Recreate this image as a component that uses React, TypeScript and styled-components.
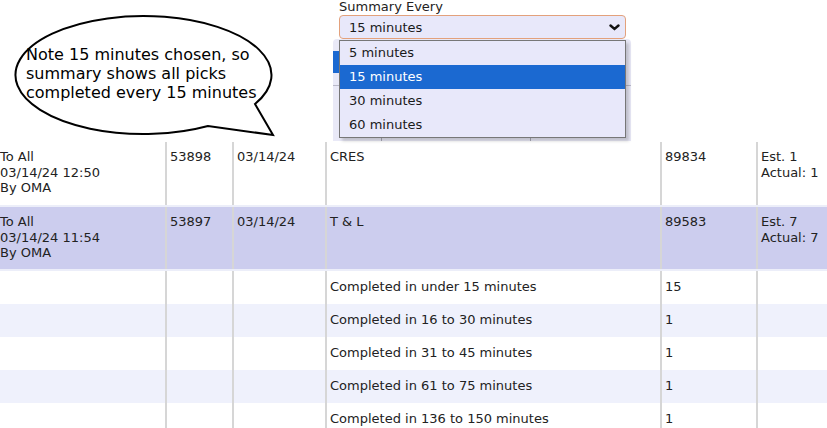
import { FC } from "react";
import styled, { createGlobalStyle } from "styled-components";

const GlobalStyle = createGlobalStyle`
  html, body {
    margin: 0;
    padding: 0;
    background: #fff;
    overflow: hidden;
  }
  body {
    font-family: "DejaVu Sans", Verdana, sans-serif;
    font-size: 13px;
    color: #222;
  }
`;

const COLUMNS = "165px 67px 93px 335px 96px 1fr";

const Page = styled.div`
  position: relative;
  width: 827px;
  height: 428px;
  overflow: hidden;
`;

const Top = styled.div`
  display: flex;
  height: 142px;
  padding-left: 333px;
`;

const FilterColumn = styled.div`
  position: relative;
  display: flex;
  flex-direction: column;
  width: 298px;
`;

const FilterLabel = styled.div`
  padding-left: 6px;
  line-height: 14px;
  color: #222;
`;

const SelectBox = styled.div`
  display: flex;
  align-items: center;
  justify-content: space-between;
  box-sizing: border-box;
  margin: 1px 0 0 6px;
  width: 287px;
  height: 24px;
  padding: 1px 5px 0 9px;
  border: 1px solid #e3a17c;
  border-radius: 4px;
  background: #e8e8fa;
  color: #1a1a1a;
`;

const TabPanel = styled.div`
  flex: 1;
  display: flex;
  flex-direction: column;
  margin: 0 0 1px;
  background: #e9e9f7;
  border-radius: 4px 4px 0 0;
`;

const TabBand = styled.div`
  height: 46px;
  border-bottom: 1px solid #b9b9c9;
`;

const ActiveTab = styled.div`
  margin-top: 12px;
  width: 6px;
  height: 22px;
  background: #1b69d1;
`;

const TabGrid = styled.div`
  flex: 1;
  display: grid;
  grid-template-columns: 48px 149px 1fr;
`;

const TabCol = styled.div<{ $first?: boolean }>`
  border-left: ${({ $first }) => ($first ? "none" : "1px solid #a9a9b5")};
`;

const OptionList = styled.ul`
  position: absolute;
  top: 40px;
  left: 6px;
  box-sizing: border-box;
  width: 287px;
  margin: 0;
  padding: 0;
  list-style: none;
  background: #e8e8fa;
  border: 1px solid #777;
  box-shadow: 3px 3px 3px rgba(0, 0, 0, 0.18);
  z-index: 2;
`;

const Option = styled.li<{ $selected?: boolean }>`
  height: 24px;
  line-height: 24px;
  padding-left: 9px;
  background: ${({ $selected }) => ($selected ? "#1b69d1" : "transparent")};
  color: ${({ $selected }) => ($selected ? "#fff" : "#1a1a1a")};
`;

const Bubble = styled.div`
  position: absolute;
  left: 0;
  top: 0;
  width: 280px;
  height: 142px;
  z-index: 1;

  svg {
    position: absolute;
    left: 0;
    top: 0;
  }
`;

const BubbleText = styled.div`
  position: absolute;
  left: 26px;
  top: 45px;
  font-size: 16px;
  line-height: 19px;
  color: #000;
  white-space: nowrap;
`;

const Table = styled.div`
  display: flex;
  flex-direction: column;
`;

const Row = styled.div<{ $tone: "white" | "lavender" | "alt"; $height: number; $sep?: boolean }>`
  display: grid;
  grid-template-columns: ${COLUMNS};
  height: ${({ $height }) => $height}px;
  background: ${({ $tone }) =>
    $tone === "lavender" ? "#cccdee" : $tone === "alt" ? "#eff1fc" : "#fff"};
  border-bottom: ${({ $sep }) => ($sep ? "2px solid #eceef9" : "none")};
`;

const Cell = styled.div<{ $first?: boolean }>`
  border-left: ${({ $first }) => ($first ? "none" : "2px solid #d6d6d6")};
  padding: 7px 3px 0 ${({ $first }) => ($first ? "0" : "3px")};
  line-height: 15.5px;
  white-space: nowrap;
`;

const SummaryCell = styled(Cell)`
  display: flex;
  align-items: center;
  padding-top: 0;
  padding-bottom: 2px;
`;

const Chevron: FC = () => (
  <svg width="11" height="7" viewBox="0 0 11 7">
    <path d="M1.5 1.5 L5.5 5 L9.5 1.5" fill="none" stroke="#111" strokeWidth="2.4" strokeLinecap="round" />
  </svg>
);

const options = ["5 minutes", "15 minutes", "30 minutes", "60 minutes"];

const picks = [
  {
    lines: ["To All", "03/14/24 12:50", "By OMA"],
    id: "53898",
    date: "03/14/24",
    name: "CRES",
    order: "89834",
    counts: ["Est. 1", "Actual: 1"],
    tone: "white" as const,
    height: 63,
  },
  {
    lines: ["To All", "03/14/24 11:54", "By OMA"],
    id: "53897",
    date: "03/14/24",
    name: "T & L",
    order: "89583",
    counts: ["Est. 7", "Actual: 7"],
    tone: "lavender" as const,
    height: 62,
  },
];

const summary = [
  ["Completed in under 15 minutes", "15"],
  ["Completed in 16 to 30 minutes", "1"],
  ["Completed in 31 to 45 minutes", "1"],
  ["Completed in 61 to 75 minutes", "1"],
  ["Completed in 136 to 150 minutes", "1"],
];

const SpeechBubble: FC = () => (
  <Bubble>
    <svg width="280" height="142" viewBox="0 0 280 142">
      <path
        d="M255 104 L273 135 L208 126 A128 59 0 1 1 255 104 Z"
        fill="#fff"
        stroke="#000"
        strokeWidth="2"
        strokeLinejoin="miter"
      />
    </svg>
    <BubbleText>
      Note 15 minutes chosen, so
      <br />
      summary shows all picks
      <br />
      completed every 15 minutes
    </BubbleText>
  </Bubble>
);

const App: FC = () => (
  <Page>
    <GlobalStyle />
    <SpeechBubble />
    <Top>
      <FilterColumn>
        <FilterLabel>Summary Every</FilterLabel>
        <SelectBox>
          <span>15 minutes</span>
          <Chevron />
        </SelectBox>
        <TabPanel>
          <TabBand>
            <ActiveTab />
          </TabBand>
          <TabGrid>
            <TabCol $first />
            <TabCol />
            <TabCol />
          </TabGrid>
        </TabPanel>
        <OptionList>
          {options.map((o) => (
            <Option key={o} $selected={o === "15 minutes"}>
              {o}
            </Option>
          ))}
        </OptionList>
      </FilterColumn>
    </Top>
    <Table>
      {picks.map((p) => (
        <Row key={p.id} $tone={p.tone} $height={p.height} $sep>
          <Cell $first>
            {p.lines.map((l) => (
              <div key={l}>{l}</div>
            ))}
          </Cell>
          <Cell>{p.id}</Cell>
          <Cell>{p.date}</Cell>
          <Cell>{p.name}</Cell>
          <Cell>{p.order}</Cell>
          <Cell>
            {p.counts.map((c) => (
              <div key={c}>{c}</div>
            ))}
          </Cell>
        </Row>
      ))}
      {summary.map(([label, count], i) => (
        <Row key={label} $tone={i % 2 ? "alt" : "white"} $height={33}>
          <SummaryCell $first />
          <SummaryCell />
          <SummaryCell />
          <SummaryCell>{label}</SummaryCell>
          <SummaryCell>{count}</SummaryCell>
          <SummaryCell />
        </Row>
      ))}
    </Table>
  </Page>
);

export default App;
